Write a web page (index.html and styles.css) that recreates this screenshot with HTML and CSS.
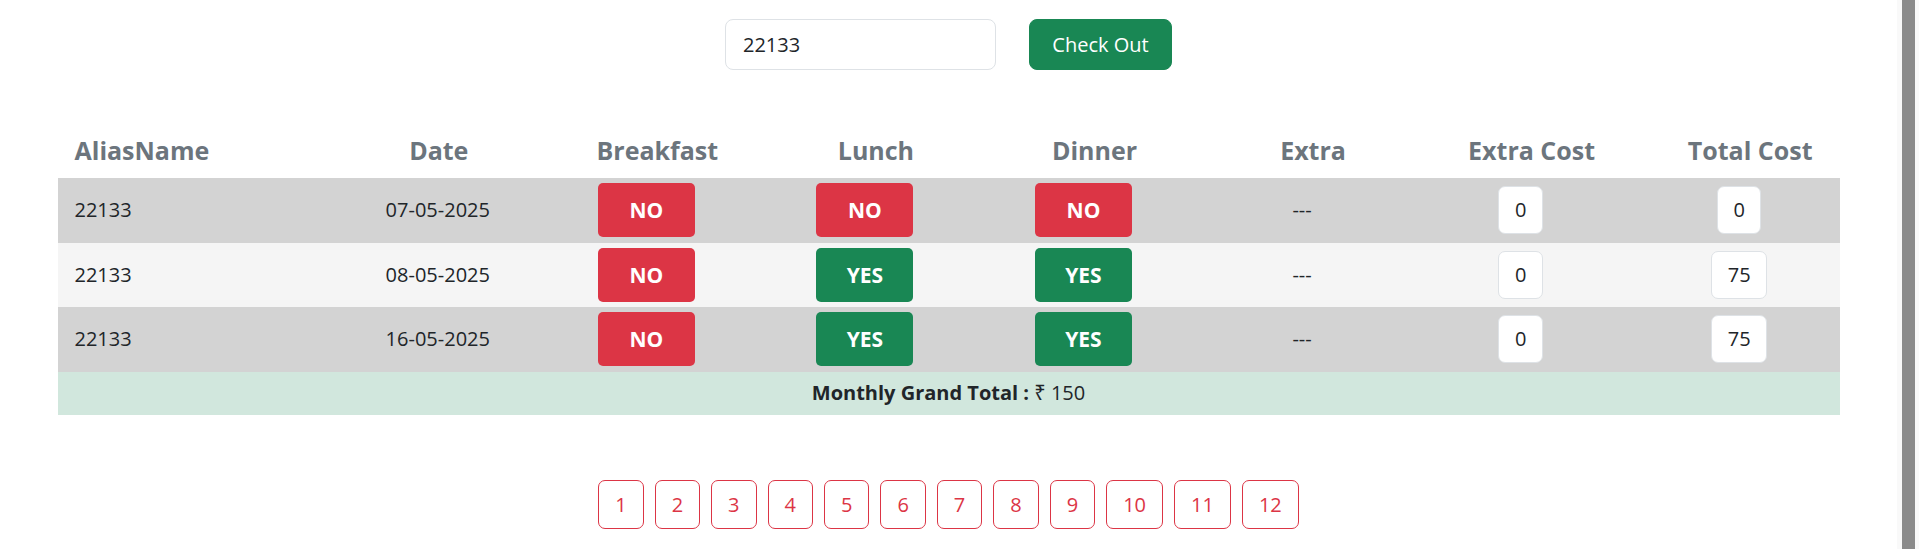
FILE: index.html
```html
<!DOCTYPE html>
<html lang="en">
<head>
<meta charset="utf-8">
<title>Meal Check Out</title>
<link rel="stylesheet" href="styles.css">
</head>
<body>
<div class="page">
  <div class="topbar">
    <input class="alias-input" type="text" value="22133">
    <button class="btn-checkout" type="button">Check Out</button>
  </div>

  <table class="meal-table">
    <colgroup>
      <col class="col-first">
      <col><col><col><col><col><col><col>
    </colgroup>
    <thead>
      <tr>
        <th class="th-left">AliasName</th>
        <th>Date</th>
        <th>Breakfast</th>
        <th>Lunch</th>
        <th>Dinner</th>
        <th>Extra</th>
        <th>Extra Cost</th>
        <th>Total Cost</th>
      </tr>
    </thead>
    <tbody>
      <tr class="row-dark">
        <td class="td-left">22133</td>
        <td class="td-date">07-05-2025</td>
        <td><span class="meal meal-no">NO</span></td>
        <td><span class="meal meal-no">NO</span></td>
        <td><span class="meal meal-no">NO</span></td>
        <td>---</td>
        <td><span class="cost-box">0</span></td>
        <td><span class="cost-box">0</span></td>
      </tr>
      <tr class="row-light">
        <td class="td-left">22133</td>
        <td class="td-date">08-05-2025</td>
        <td><span class="meal meal-no">NO</span></td>
        <td><span class="meal meal-yes">YES</span></td>
        <td><span class="meal meal-yes">YES</span></td>
        <td>---</td>
        <td><span class="cost-box">0</span></td>
        <td><span class="cost-box">75</span></td>
      </tr>
      <tr class="row-dark">
        <td class="td-left">22133</td>
        <td class="td-date">16-05-2025</td>
        <td><span class="meal meal-no">NO</span></td>
        <td><span class="meal meal-yes">YES</span></td>
        <td><span class="meal meal-yes">YES</span></td>
        <td>---</td>
        <td><span class="cost-box">0</span></td>
        <td><span class="cost-box">75</span></td>
      </tr>
      <tr class="row-total">
        <td colspan="8"><strong>Monthly Grand Total :</strong> ₹ 150</td>
      </tr>
    </tbody>
  </table>

  <div class="pager">
    <button class="page-btn" type="button">1</button>
    <button class="page-btn" type="button">2</button>
    <button class="page-btn" type="button">3</button>
    <button class="page-btn" type="button">4</button>
    <button class="page-btn" type="button">5</button>
    <button class="page-btn" type="button">6</button>
    <button class="page-btn" type="button">7</button>
    <button class="page-btn" type="button">8</button>
    <button class="page-btn" type="button">9</button>
    <button class="page-btn" type="button">10</button>
    <button class="page-btn" type="button">11</button>
    <button class="page-btn" type="button">12</button>
  </div>
</div>
<div class="scrollbar"><div class="scroll-thumb"></div></div>
</body>
</html>
```

FILE: styles.css
```css
html, body {
  margin: 0;
  padding: 0;
  height: 100%;
  overflow: hidden;
  background: #ffffff;
}

body {
  display: flex;
  font-family: "Open Sans", "Noto Sans", sans-serif;
  font-size: 20px;
  line-height: 30px;
  color: #212529;
}

.page {
  flex: 1;
  min-width: 0;
  padding: 19px 57.5px 0 57.5px;
  box-sizing: border-box;
}

.scrollbar {
  width: 22px;
  background: #f9f9f9;
  padding: 0 4px 0 5px;
  box-sizing: border-box;
}

.scroll-thumb {
  height: 100%;
  background: #8b8b8b;
}

.topbar {
  display: flex;
  justify-content: center;
  gap: 33px;
}

.alias-input {
  width: 271px;
  height: 51px;
  box-sizing: border-box;
  padding: 0 17px;
  border: 1px solid #dee2e6;
  border-radius: 8px;
  font-family: inherit;
  font-size: 20px;
  color: #212529;
  background: #fff;
  outline: none;
}

.btn-checkout {
  width: 143px;
  height: 51px;
  box-sizing: border-box;
  border: 1px solid #198754;
  border-radius: 8px;
  background: #198754;
  color: #fff;
  font-family: inherit;
  font-size: 20px;
  padding: 0;
}

.meal-table {
  width: 100%;
  margin-top: 53px;
  border-collapse: collapse;
  table-layout: fixed;
}

.col-first {
  width: 252px;
}

.meal-table th {
  font-size: 25px;
  line-height: 39px;
  font-weight: 700;
  color: #6c757d;
  text-align: center;
  padding: 8px 0 8px 40px;
  white-space: nowrap;
}

.meal-table th.th-left {
  text-align: left;
  padding-left: 17px;
}

.meal-table td {
  text-align: center;
  padding: 5.25px 0 5.25px 18px;
  vertical-align: middle;
  white-space: nowrap;
}

.meal-table td.td-left {
  text-align: left;
  padding-left: 17px;
}

.meal-table td.td-date {
  padding-left: 38px;
}

.row-dark {
  background: #d3d3d3;
}

.row-light {
  background: #f5f5f5;
}

.meal {
  display: inline-flex;
  align-items: center;
  justify-content: center;
  width: 97px;
  height: 54px;
  border-radius: 5px;
  color: #fff;
  font-weight: 700;
  font-size: 21px;
  vertical-align: middle;
}

.meal-no {
  background: #dc3545;
}

.meal-yes {
  background: #198754;
}

.cost-box {
  display: inline-block;
  padding: 8px 15.5px;
  border: 1px solid #dee2e6;
  border-radius: 7px;
  background: #fff;
  vertical-align: middle;
}

.row-total td {
  background: #d1e7dd;
  padding: 6.5px 0;
  text-align: center;
}

.row-total strong {
  font-weight: 700;
}

.pager {
  display: flex;
  justify-content: center;
  gap: 11px;
  margin-top: 65.5px;
}

.page-btn {
  height: 49px;
  padding: 0 16px;
  border: 1px solid #dc3545;
  border-radius: 7px;
  background: transparent;
  color: #dc3545;
  font-family: inherit;
  font-size: 20px;
  line-height: 30px;
}
```
